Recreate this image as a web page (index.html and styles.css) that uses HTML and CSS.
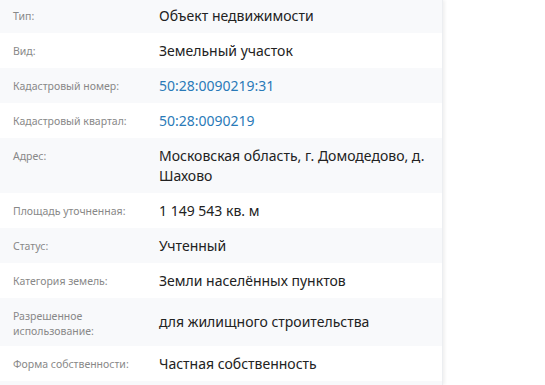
FILE: index.html
```html
<!DOCTYPE html>
<html lang="ru">
<head>
<meta charset="utf-8">
<title>Объект недвижимости</title>
<link rel="stylesheet" href="styles.css">
</head>
<body>
<div class="panel">
  <div class="list">
    <div class="row"><div class="label">Тип:</div><div class="value">Объект недвижимости</div></div>
    <div class="row"><div class="label">Вид:</div><div class="value">Земельный участок</div></div>
    <div class="row"><div class="label">Кадастровый номер:</div><div class="value"><a class="link" href="#">50:28:0090219:31</a></div></div>
    <div class="row"><div class="label">Кадастровый квартал:</div><div class="value"><a class="link" href="#">50:28:0090219</a></div></div>
    <div class="row"><div class="label">Адрес:</div><div class="value">Московская область, г. Домодедово, д. Шахово</div></div>
    <div class="row"><div class="label">Площадь уточненная:</div><div class="value">1 149 543 кв. м</div></div>
    <div class="row"><div class="label">Статус:</div><div class="value">Учтенный</div></div>
    <div class="row"><div class="label">Категория земель:</div><div class="value">Земли населённых пунктов</div></div>
    <div class="row"><div class="label">Разрешенное использование:</div><div class="value">для жилищного строительства</div></div>
    <div class="row"><div class="label">Форма собственности:</div><div class="value">Частная собственность</div></div>
    <div class="row"><div class="label">&nbsp;</div><div class="value">&nbsp;</div></div>
  </div>
</div>
</body>
</html>
```
FILE: styles.css
```css
html, body {
  margin: 0;
  padding: 0;
  background: #ffffff;
  overflow: hidden;
}
body {
  font-family: "Noto Sans", "Open Sans", sans-serif;
  height: 385px;
}
.panel {
  width: 442px;
  height: 385px;
  background: #ffffff;
  box-shadow: 2px 0 3px rgba(0, 0, 0, 0.06);
  border-right: 1px solid #eceef1;
  overflow: hidden;
}
.list {
  margin-top: -2px;
}
.row {
  display: flex;
  align-items: center;
  padding: 7.5px 6px 7.5px 13px;
}
.row:nth-child(odd) {
  background: #f8f9fb;
}
.label {
  align-self: flex-start;
  width: 132px;
  flex: none;
  padding-top: 3px;
  padding-right: 8px;
  box-sizing: border-box;
  margin-right: 14px;
  font-size: 10.5px;
  line-height: 15px;
  color: #888888;
}
.value {
  flex: 1;
  font-size: 14px;
  line-height: 20px;
  color: #222222;
}
.link {
  color: #2a7ab8;
  text-decoration: none;
}
```
